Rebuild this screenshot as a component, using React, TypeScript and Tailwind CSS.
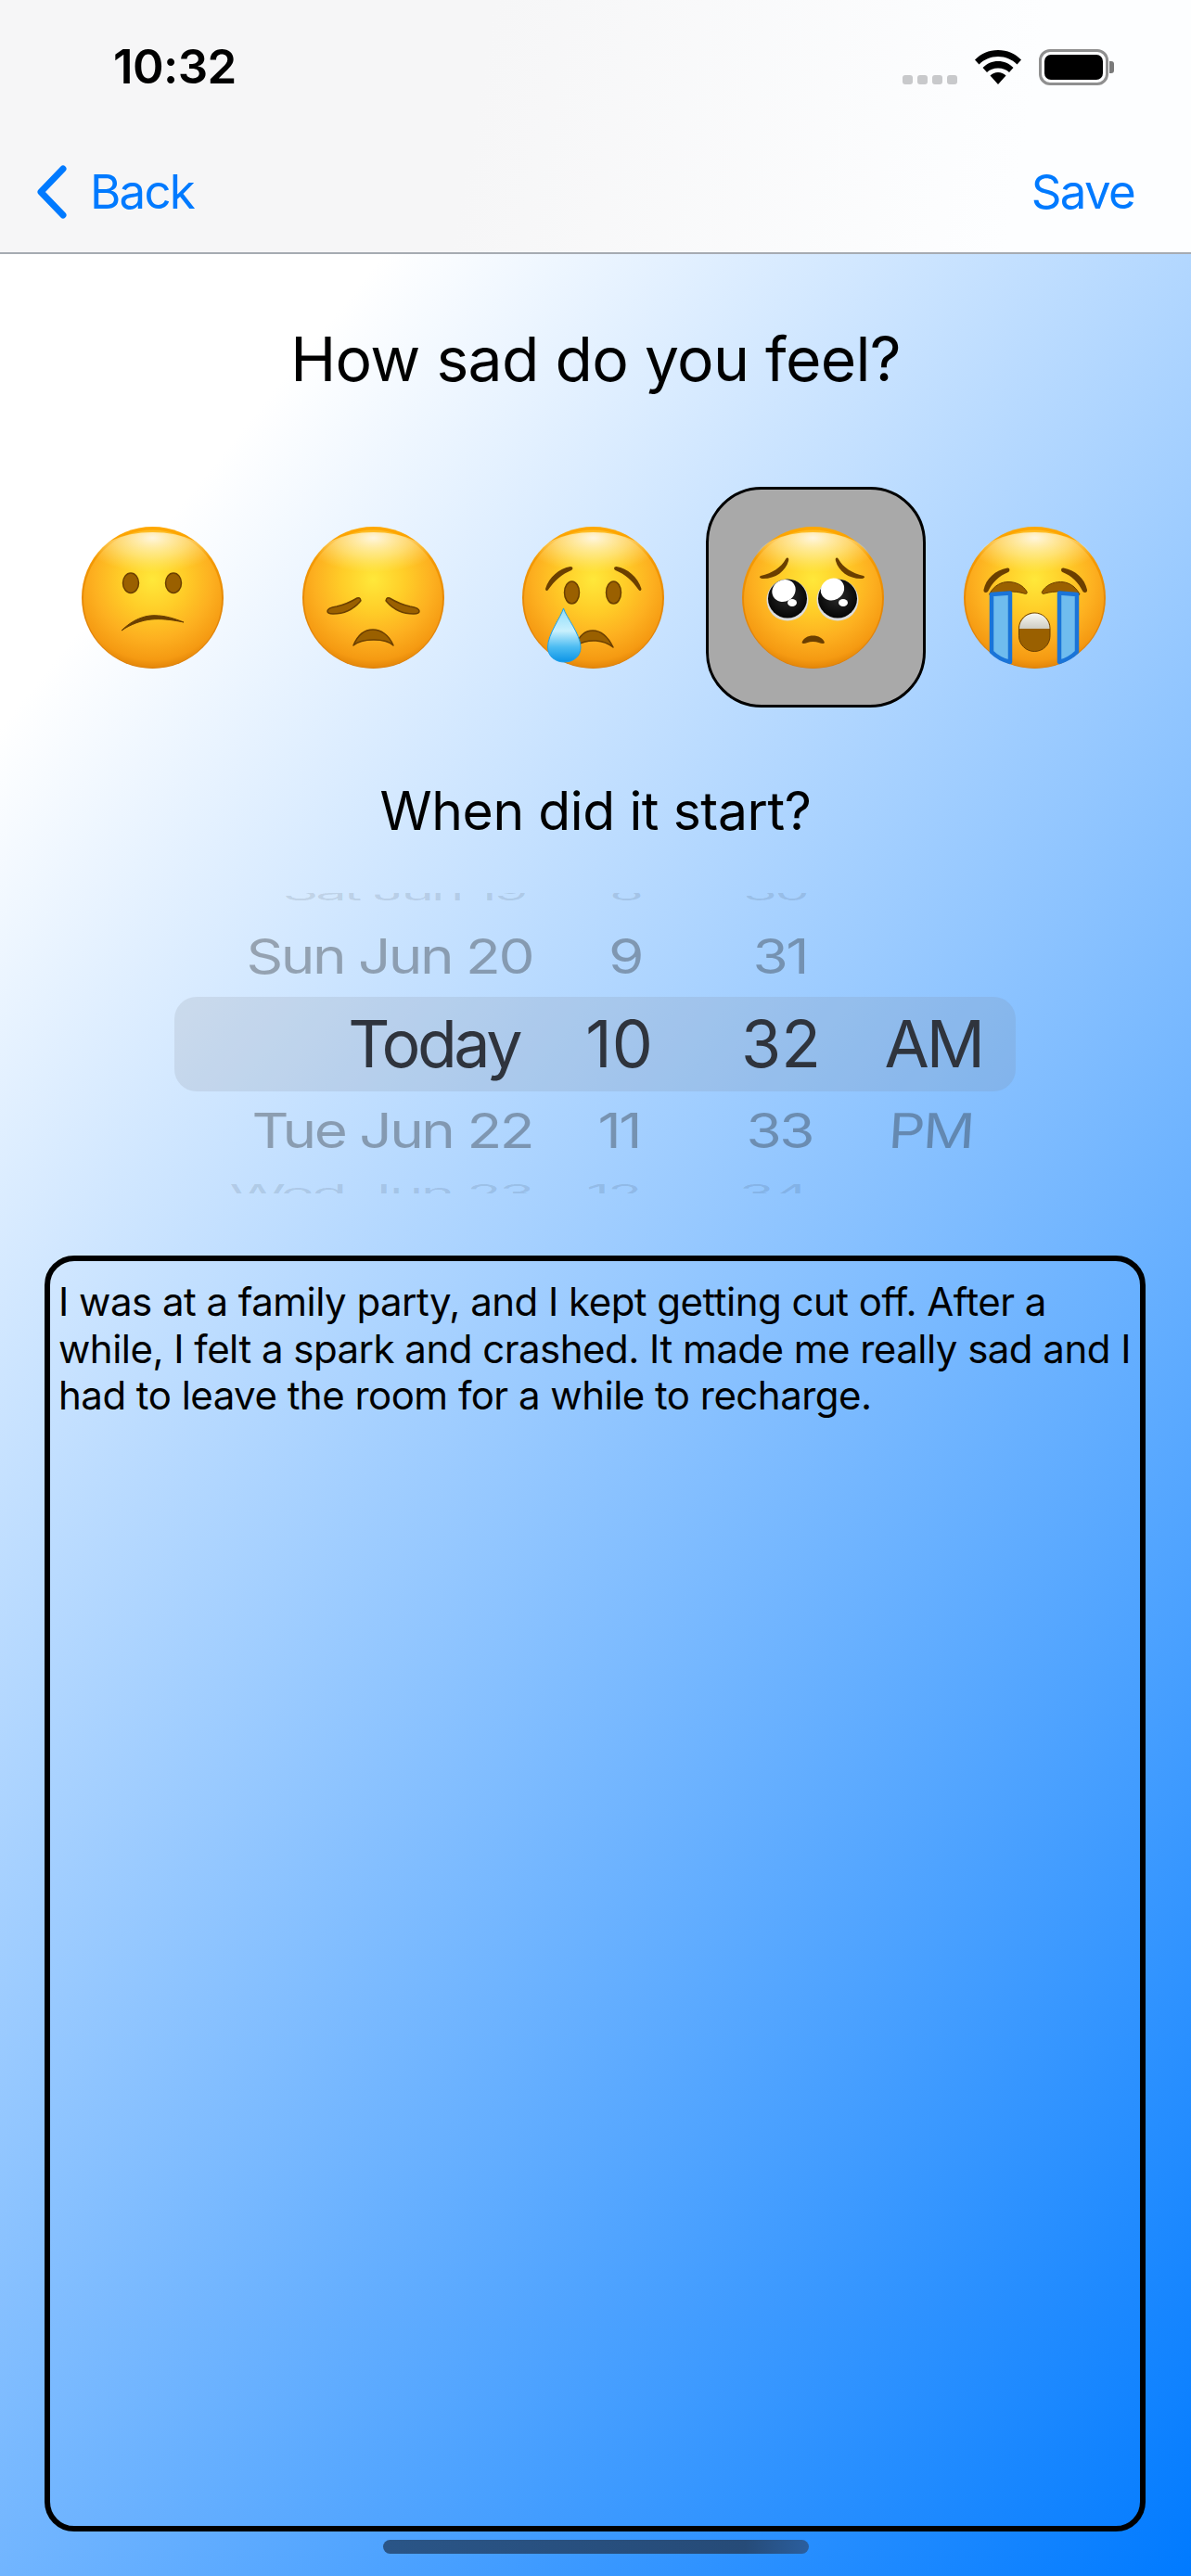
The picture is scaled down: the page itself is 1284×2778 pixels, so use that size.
import React from "react";

const SF = "font-['Inter','Liberation_Sans',sans-serif]";

function Defs() {
  return (
    <svg width="0" height="0" className="block h-0 w-0">
      <defs>
        <radialGradient id="skin" cx="50%" cy="36%" r="66%">
          <stop offset="0" stopColor="#ffe83a" />
          <stop offset="0.35" stopColor="#ffcd28" />
          <stop offset="0.65" stopColor="#fdb020" />
          <stop offset="0.88" stopColor="#f59a12" />
          <stop offset="1" stopColor="#dd7f05" />
        </radialGradient>
        <linearGradient id="rim" x1="0" y1="0" x2="0" y2="1">
          <stop offset="0" stopColor="#ffa800" />
          <stop offset="0.5" stopColor="#e88a06" />
          <stop offset="1" stopColor="#d97c0c" />
        </linearGradient>
        <radialGradient id="shine" cx="50%" cy="10%" r="62%">
          <stop offset="0" stopColor="#ffffff" stopOpacity="0.85" />
          <stop offset="0.55" stopColor="#fffbc8" stopOpacity="0.45" />
          <stop offset="1" stopColor="#fff6a0" stopOpacity="0" />
        </radialGradient>
        <linearGradient id="drop" x1="0" y1="0" x2="0" y2="1">
          <stop offset="0" stopColor="#8fdcfa" />
          <stop offset="0.42" stopColor="#c8f0fd" />
          <stop offset="0.72" stopColor="#4cbcf2" />
          <stop offset="1" stopColor="#0c94e6" />
        </linearGradient>
        <radialGradient id="eye" cx="50%" cy="45%" r="55%">
          <stop offset="0" stopColor="#2c2c2c" />
          <stop offset="1" stopColor="#050505" />
        </radialGradient>
        <linearGradient id="tooth" x1="0" y1="0" x2="0" y2="1">
          <stop offset="0" stopColor="#f7f7f2" />
          <stop offset="1" stopColor="#cfcdc4" />
        </linearGradient>
      </defs>
    </svg>
  );
}

function Face({ children }: { children?: React.ReactNode }) {
  return (
    <svg width="153" height="153" viewBox="0 0 153 153" className="block">
      <circle cx="76.5" cy="76.5" r="76.5" fill="url(#rim)" />
      <circle cx="76.5" cy="78" r="74.5" fill="url(#skin)" />
      <ellipse cx="76.5" cy="36" rx="62" ry="30" fill="url(#shine)" />
      {children}
    </svg>
  );
}

const brown = "#9a6000";
const dark = "#6b3f00";

function Confused() {
  return (
    <Face>
      <ellipse cx="53" cy="60.700" rx="8.500" ry="10.700" fill={brown} stroke={dark} strokeWidth="1.500" />
      <ellipse cx="99" cy="60.700" rx="8.500" ry="10.700" fill={brown} stroke={dark} strokeWidth="1.500" />
      <path d="M43 112 C55 100 68 95.700 78 95.700 C90 95.700 100 99 110 103 C95 100 85 99 75 100 C65 101 53 105 43 112Z" fill={dark} stroke={dark} strokeWidth="1" strokeLinejoin="round" />
    </Face>
  );
}

function Disappointed() {
  return (
    <Face>
      <path d="M27 91 C27 88 31 87 37 86 C46 84 54 80 59 77 C62 76 64 79 62 81 C55 89 45 94 33 94 C28 94 27 93 27 91Z" fill={brown} stroke={dark} strokeWidth="1.500" />
      <path d="M126 91 C126 88 122 87 116 86 C107 84 99 80 94 77 C91 76 89 79 91 81 C98 89 108 94 120 94 C125 94 126 93 126 91Z" fill={brown} stroke={dark} strokeWidth="1.500" />
      <path d="M55 128 C60 116 68 111 76 111 C84 111 93 116 98 128 C90 120 64 120 55 128Z" fill={brown} stroke={dark} strokeWidth="1.500" strokeLinejoin="round" />
    </Face>
  );
}

function Crying() {
  return (
    <Face>
      <path d="M25 67 C29 54 40 45 52 43 C55 43 55 46 53 47 C43 51 35 58 28 68 C27 70 25 69 25 67Z" fill={dark} />
      <path d="M128.500 67 C124.500 54 113.500 45 101.500 43 C98.500 43 98.500 46 100.500 47 C110.500 51 118.500 58 125.500 68 C126.500 70 128.500 69 128.500 67Z" fill={dark} />
      <ellipse cx="53.500" cy="71" rx="8" ry="12" fill={brown} stroke={dark} strokeWidth="1.500" />
      <ellipse cx="98.500" cy="71" rx="8" ry="12" fill={brown} stroke={dark} strokeWidth="1.500" />
      <path d="M58 128 C62 116 68 112 76 112 C84 112 92 118 98 130 C88 122 72 120 58 128Z" fill={brown} stroke={dark} strokeWidth="1.500" strokeLinejoin="round" />
      <path d="M44.500 88 C47 97 63 116 63 130 C63 140 55 146 45.500 146 C36 146 27.500 140 27.500 130 C27.500 116 42 97 44.500 88Z" fill="url(#drop)" stroke="#1ea0ea" strokeWidth="1" />
    </Face>
  );
}

function Pleading() {
  return (
    <Face>
      <path d="M20 53 C33 50 42 44 47 35 C49 32 51 34 50 37 C47 48 36 56 23 56 C19 56 18 54 20 53Z" fill={dark} />
      <path d="M131 53 C118 50 109 44 104 35 C102 32 100 34 101 37 C104 48 115 56 128 56 C132 56 133 54 131 53Z" fill={dark} />
      <circle cx="49" cy="79" r="22.500" fill="#dcdcdc" />
      <circle cx="103" cy="79" r="22.500" fill="#dcdcdc" />
      <circle cx="49" cy="77.500" r="21" fill="url(#eye)" />
      <circle cx="103" cy="77.500" r="21" fill="url(#eye)" />
      <ellipse cx="45" cy="69" rx="13" ry="11.500" transform="rotate(-30 45 69)" fill="#fff" />
      <ellipse cx="97.500" cy="67.500" rx="13" ry="11.500" transform="rotate(-30 97.500 67.500)" fill="#fff" />
      <ellipse cx="54" cy="82" rx="5" ry="4" fill="#fff" />
      <ellipse cx="109" cy="82" rx="5" ry="4" fill="#fff" />
      <path d="M64.500 125 C66 120 71 117.500 76.500 117.500 C82 117.500 87.500 120 89 125 C87 128 83 124 76.500 124 C70 124 66.500 128 64.500 125Z" fill={dark} />
    </Face>
  );
}

function Sobbing() {
  return (
    <Face>
      <path d="M21.500 68 C24 56 34 47 47 44.500 C50 44 50 48 48 49 C38 53 31 60 26 70 C24 72 21 71 21.500 68Z" fill={dark} />
      <path d="M133 68 C130.500 56 120.500 47 107.500 44.500 C104.500 44 104.500 48 106.500 49 C116.500 53 123.500 60 128.500 70 C130.500 72 133.500 71 133 68Z" fill={dark} />
      <path d="M28 72 C33 63 41 59.500 48 59.500 C56 59.500 64 63 68 70 C69 72 67 73 65 72 C55 69 40 69 30 74 C28 74 27 73 28 72Z" fill={brown} stroke={dark} strokeWidth="1" />
      <path d="M124.500 72 C119.500 63 111.500 59.500 104.500 59.500 C96.500 59.500 88.500 63 84.500 70 C83.500 72 85.500 73 87.500 72 C97.500 69 112.500 69 122.500 74 C124.500 74 125.500 73 124.500 72Z" fill={brown} stroke={dark} strokeWidth="1" />
      <path d="M30 73 L50 71.500 L50 146 C42 144 35 140 30 135Z" fill="#6fbcee" stroke="#1a74d8" strokeWidth="4.500" strokeLinejoin="round" />
      <path d="M103 71.500 L122 73 L122 135 C117 140 110 144 103 146Z" fill="#6fbcee" stroke="#1a74d8" strokeWidth="4.500" strokeLinejoin="round" />
      <rect x="59.500" y="93" width="33.500" height="41.500" rx="16.700" fill={brown} stroke={dark} strokeWidth="1" />
      <path d="M60 110 C60 100 68 93.500 76.500 93.500 C85 93.500 92.500 100 92.500 110Z" fill="url(#tooth)" />
    </Face>
  );
}

function Wifi() {
  return (
    <svg width="50" height="37" viewBox="0 0 50 37" className="block">
      <path d="M25 0C15 0 6.500 4 0 10.500L4.500 15.500C10 10 17 7 25 7C33 7 40 10 45.500 15.500L50 10.500C43.500 4 35 0 25 0Z" fill="#000" />
      <path d="M25 12C18.500 12 13 14.500 8.500 19L13 24C16 21 20 19.500 25 19.500C30 19.500 34 21 37 24L41.500 19C37 14.500 31.500 12 25 12Z" fill="#000" />
      <path d="M25 24C21.500 24 19 25.200 16.500 27.500L25 37L33.500 27.500C31 25.200 28.500 24 25 24Z" fill="#000" />
    </svg>
  );
}

function Battery() {
  return (
    <div className="flex items-center">
      <div className="h-[39px] w-[75px] rounded-[12px] border-[3px] border-[#8f8f8f] p-[3px]">
        <div className="h-full w-full rounded-[7px] bg-black" />
      </div>
      <div className="ml-[1px] h-[13px] w-[5px] rounded-r-[3px] bg-[#7a7a7a]" />
    </div>
  );
}

function Cell({ className = "", children }: { className?: string; children?: React.ReactNode }) {
  return <div className={`flex items-center justify-end whitespace-nowrap ${className}`}>{children}</div>;
}

const cols = "grid grid-cols-[386px_150px_190px_181px]";

export default function App() {
  return (
    <div className={`${SF} relative flex h-[2778px] w-[1284px] flex-col overflow-hidden bg-[linear-gradient(129deg,#ffffff_18%,#007aff_100%)] text-black`}>
      <Defs />
      <header className="h-[274px] shrink-0 border-b-[2px] border-[#a6abb2] bg-[linear-gradient(100deg,#f6f6f7_40%,#fdfeff_85%)]">
        <div className="flex h-[167px] items-start justify-between">
          <span className="ml-[122px] mt-[40px] text-[51px] font-semibold leading-[64px] tracking-[-0.6px]">10:32</span>
          <div className="mr-[83px] mt-[53px] flex items-start">
            <div className="mr-[19px] mt-[28px] flex gap-[5px]">
              <i className="block h-[10px] w-[11px] rounded-[3px] bg-[#c8c9cb]" />
              <i className="block h-[10px] w-[11px] rounded-[3px] bg-[#c8c9cb]" />
              <i className="block h-[10px] w-[11px] rounded-[3px] bg-[#c8c9cb]" />
              <i className="block h-[10px] w-[11px] rounded-[3px] bg-[#c8c9cb]" />
            </div>
            <div className="mr-[19px] mt-[1px]"><Wifi /></div>
            <Battery />
          </div>
        </div>
        <div className="flex h-[80px] items-center justify-between text-[51px] leading-[64px] text-[#007aff]">
          <div className="ml-[39px] flex items-center">
            <svg width="34" height="58" viewBox="0 0 34 58" className="block">
              <path d="M29 4 L5 29 L29 54" fill="none" stroke="#007aff" strokeWidth="7" strokeLinecap="round" strokeLinejoin="round" />
            </svg>
            <span className="ml-[24px] tracking-[-1.800px]">Back</span>
          </div>
          <span className="mr-[61px] tracking-[-1.700px]">Save</span>
        </div>
      </header>

      <h1 className="mt-[78px] text-center text-[66px] font-normal leading-[70px] tracking-[-0.700px]">How sad do you feel?</h1>

      <div className="mt-[103px] flex pl-[46px]">
        <div className="flex h-[238px] w-[237.500px] items-center justify-center"><Confused /></div>
        <div className="flex h-[238px] w-[237.500px] items-center justify-center"><Disappointed /></div>
        <div className="flex h-[238px] w-[237.500px] items-center justify-center"><Crying /></div>
        <div className="ml-[2px] flex h-[238px] w-[237px] items-center justify-center rounded-[60px] border-[3px] border-black bg-[#a9a9a9] pr-[5px]"><Pleading /></div>
        <div className="flex h-[238px] w-[236.500px] items-center justify-center"><Sobbing /></div>
      </div>

      <h2 className="mt-[77px] text-center text-[57px] font-normal leading-[70px] tracking-[-0.400px]">When did it start?</h2>

      <div className="relative ml-[188px] mt-[53px] w-[907px]">
        <div className="pointer-events-none absolute left-0 right-0 top-[112px] h-[102px] rounded-[24px] bg-[#767680]/15" />
        <div className="h-[26px] overflow-hidden text-[60px] leading-[26px] tracking-[-3px] text-black/10">
          <div className={`${cols} h-full items-end [transform:translateY(-14px)_scaleY(.42)]`}>
            <Cell className="pr-[7px]">Sat Jun 19</Cell>
            <Cell className="pr-[33px]">8</Cell>
            <Cell className="pr-[44px]">30</Cell>
            <Cell />
          </div>
        </div>
        <div className={`${cols} h-[86px] text-[62px] leading-[86px] tracking-[-2.500px] text-[#1f1f1f]/35 [transform:scaleY(.84)]`}>
          <Cell>Sun Jun 20</Cell>
          <Cell className="pr-[32px]">9</Cell>
          <Cell className="pr-[44px]">31</Cell>
          <Cell />
        </div>
        <div className={`${cols} h-[102px] text-[70px] leading-[102px] text-[#232932]`}>
          <Cell className="pr-[14px] tracking-[-3.500px]">Today</Cell>
          <Cell className="pr-[20px]">10</Cell>
          <Cell className="pr-[29px]">32</Cell>
          <Cell className="pr-[36px] tracking-[-3px]">AM</Cell>
        </div>
        <div className={`${cols} h-[85px] text-[62px] leading-[85px] tracking-[-2.500px] text-[#1f1f1f]/35 [transform:scaleY(.84)]`}>
          <Cell>Tue Jun 22</Cell>
          <Cell className="pr-[34px]">11</Cell>
          <Cell className="pr-[38px]">33</Cell>
          <Cell className="pr-[46px]"><span className="inline-block -skew-x-3">PM</span></Cell>
        </div>
        <div className="h-[25px] overflow-hidden text-[62px] leading-[25px] tracking-[-2.500px] text-black/10">
          <div className={`${cols} h-full items-start [transform:translateY(12px)_scaleY(.42)]`}>
            <Cell>Wed Jun 23</Cell>
            <Cell className="pr-[34px]">12</Cell>
            <Cell className="pr-[44px]">34</Cell>
            <Cell />
          </div>
        </div>
      </div>

      <div className="mx-[48px] mt-[67px] h-[1376px] w-[1187px] rounded-[32px] border-[6px] border-black pl-[9px] pr-[4px] pt-[19px] text-[42px] leading-[50.500px] tracking-[-0.520px]">
        I was at a family party, and I kept getting cut off. After a while, I felt a spark and crashed. It made me really sad and I had to leave the room for a while to recharge.
      </div>

      <div className="ml-[413px] mt-[9px] h-[15px] w-[459px] rounded-full bg-[linear-gradient(90deg,#2a5587,#264b78_85%,#2b5f9f)]" />
    </div>
  );
}
